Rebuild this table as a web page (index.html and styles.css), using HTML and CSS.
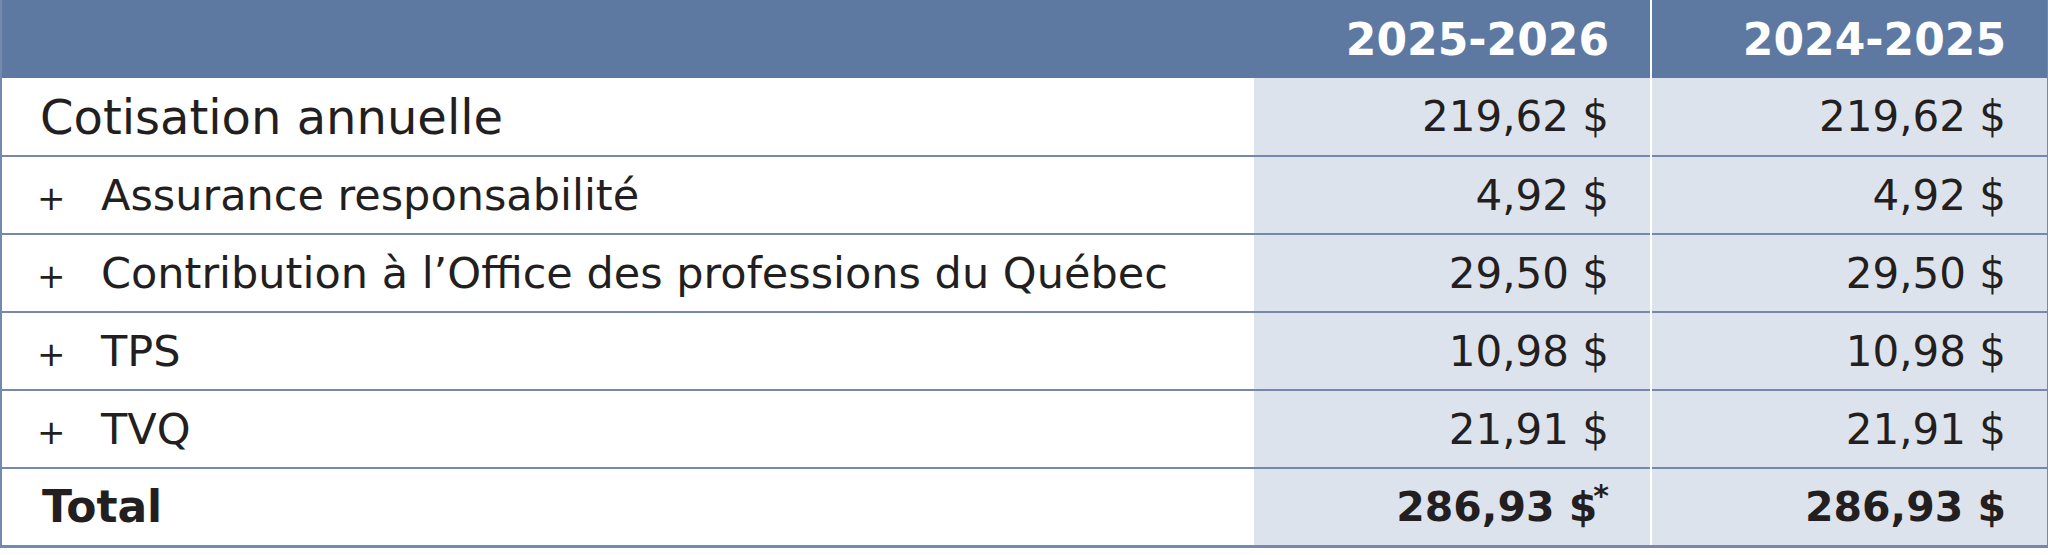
FILE: index.html
```html
<!DOCTYPE html>
<html lang="fr">
<head>
<meta charset="utf-8">
<title>Cotisation</title>
<link rel="stylesheet" href="styles.css">
</head>
<body>
<table class="fees">
  <colgroup>
    <col class="c-label">
    <col class="c-val">
    <col class="c-val">
  </colgroup>
  <thead>
    <tr>
      <th class="h-label"></th>
      <th class="h-val">2025-2026</th>
      <th class="h-val last">2024-2025</th>
    </tr>
  </thead>
  <tbody>
    <tr>
      <td class="label main">Cotisation annuelle</td>
      <td class="val">219,62 $</td>
      <td class="val last">219,62 $</td>
    </tr>
    <tr>
      <td class="label"><span class="plus">+</span>Assurance responsabilité</td>
      <td class="val">4,92 $</td>
      <td class="val last">4,92 $</td>
    </tr>
    <tr>
      <td class="label"><span class="plus">+</span>Contribution à l’Office des professions du Québec</td>
      <td class="val">29,50 $</td>
      <td class="val last">29,50 $</td>
    </tr>
    <tr>
      <td class="label"><span class="plus">+</span>TPS</td>
      <td class="val">10,98 $</td>
      <td class="val last">10,98 $</td>
    </tr>
    <tr>
      <td class="label"><span class="plus">+</span>TVQ</td>
      <td class="val">21,91 $</td>
      <td class="val last">21,91 $</td>
    </tr>
    <tr class="total">
      <td class="label total-label">Total</td>
      <td class="val">286,93 $<sup class="star">*</sup></td>
      <td class="val last">286,93 $</td>
    </tr>
  </tbody>
</table>
</body>
</html>
```
FILE: styles.css
```css
html, body {
  margin: 0;
  padding: 0;
  background: #ffffff;
}

.fees {
  width: 2048px;
  border-collapse: collapse;
  table-layout: fixed;
  font-family: "DejaVu Sans", "Liberation Sans", sans-serif;
  color: #231f20;
  border-left: 2px solid #7589ad;
  border-right: 2px solid #7589ad;
  border-bottom: 3px solid #7589ad;
}

.c-label { width: 1253px; }
.c-val { width: 397px; }

thead tr {
  background: #5e79a1;
  height: 78px;
}

th {
  padding: 0 41px 0 0;
  text-align: right;
  color: #ffffff;
  font-weight: 700;
  font-size: 44px;
  vertical-align: middle;
}

tbody tr {
  height: 78px;
  border-top: 2px solid #7589ad;
}

tbody tr:first-child { border-top: none; }

td {
  padding: 0;
  font-size: 42px;
  font-weight: 400;
  vertical-align: middle;
}

td.label {
  padding-left: 35px;
  font-size: 43px;
  background: #ffffff;
}

td.label.main {
  padding-left: 38px;
  font-size: 48px;
}

.plus {
  display: inline-block;
  width: 64px;
  font-size: 34px;
}

td.val {
  text-align: right;
  padding-right: 41px;
  background: #dde3ed;
}

td.val.last, th.last {
  border-left: 2px solid #ffffff;
}

.total td {
  font-weight: 700;
  font-size: 41px;
}

.total td.total-label {
  font-size: 44px;
  padding-left: 40px;
}

.star {
  font-size: 30px;
  vertical-align: top;
  line-height: 1;
  margin-left: -4px;
  position: relative;
  top: -2px;
}
```
